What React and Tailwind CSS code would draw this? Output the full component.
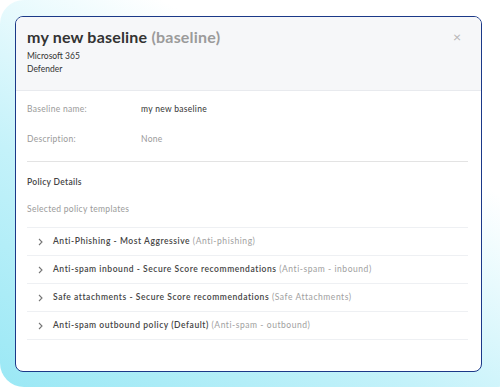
import React from "react";

const rows = [
  ["Anti-Phishing - Most Aggressive", "(Anti-phishing)"],
  ["Anti-spam inbound - Secure Score recommendations", "(Anti-spam - inbound)"],
  ["Safe attachments - Secure Score recommendations", "(Safe Attachments)"],
  ["Anti-spam outbound policy (Default)", "(Anti-spam - outbound)"],
];

function Chevron() {
  return (
    <svg width="7" height="8" viewBox="0 0 7 8" className="shrink-0">
      <path d="M2 1 L5 4 L2 7" fill="none" stroke="#777" strokeWidth="1.1" />
    </svg>
  );
}

export default function App() {
  return (
    <div
      className="w-[500px] h-[387px] bg-white overflow-hidden"
      style={{ fontFamily: "Lato, 'Noto Sans', sans-serif" }}
    >
      <div className="w-[520px] h-[387px] rounded-[24px] bg-[linear-gradient(30deg,#9ae8f5_0%,#c4f2fa_35%,#ffffff_70%)] pl-[15px] pt-[16px]">
        <div className="w-[467px] h-[356px] rounded-[8px] border-[1.5px] border-[#1b3988] bg-white overflow-hidden flex flex-col">
          <div className="h-[74px] bg-[#f6f7f9] border-b border-[#e8eaee] flex justify-between px-[11px] pt-[10px]">
            <div className="flex flex-col">
              <div className="text-[16px] font-bold leading-[20px] text-[#333] tracking-[0.2px]">
                my new baseline <span className="text-[#9b9b9b]">(baseline)</span>
              </div>
              <div className="text-[8.5px] leading-[13px] text-[#333] w-[60px] mt-[3px]">
                Microsoft 365 Defender
              </div>
            </div>
            <div className="text-[#b5b5b5] text-[14px] leading-[14px] mr-[9px] mt-[3px]">×</div>
          </div>
          <div className="px-[11px] flex flex-col tracking-[0.3px]">
            <div className="flex items-center h-[30px] mt-[3px] text-[8.5px]">
              <div className="w-[114px] text-[#9a9a9a]">Baseline name:</div>
              <div className="text-[#333]">my new baseline</div>
            </div>
            <div className="flex items-center h-[30px] text-[8.5px]">
              <div className="w-[114px] text-[#9a9a9a]">Description:</div>
              <div className="text-[#9a9a9a]">None</div>
            </div>
            <div className="h-px bg-[#e3e3e3] mt-[7px] mr-[2px]" />
            <div className="text-[8.5px] font-semibold text-[#444] mt-[14px] leading-[12px]">Policy Details</div>
            <div className="text-[8.5px] text-[#9a9a9a] mt-[15px] leading-[12px]">Selected policy templates</div>
            <div className="mt-[12px] border-t border-[#eef0f3] mr-[2px]">
              {rows.map(([a, b], i) => (
                <div key={i} className="h-[28px] border-b border-[#eef0f3] flex items-center gap-[9px] pl-[10px] text-[8.5px] tracking-[0.55px]">
                  <Chevron />
                  <div className="font-semibold text-[#444]">
                    {a} <span className="font-normal text-[#a0a0a0]">{b}</span>
                  </div>
                </div>
              ))}
            </div>
          </div>
        </div>
      </div>
    </div>
  );
}
